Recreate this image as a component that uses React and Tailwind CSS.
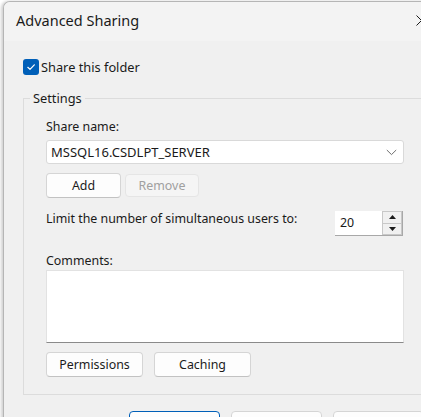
import React from "react";

const font = { fontFamily: '"Noto Sans", "Segoe UI", sans-serif' };

function Btn({ children, disabled, className = "" }) {
  return (
    <div
      className={
        "flex items-center justify-center rounded-[4px] border text-[12.4px] leading-[16px] " +
        (disabled
          ? "border-[#e5e5e5] bg-[#f5f5f5] text-[#a0a0a0] "
          : "border-[#d5d5d5] border-b-[#c2c2c2] bg-[#fdfdfd] text-[#1b1b1b] ") +
        className
      }
    >
      {children}
    </div>
  );
}

export default function App() {
  return (
    <div className="w-[421px] h-[417px] overflow-hidden bg-white" style={font}>
      <div className="ml-[3px] mt-[1px] w-[441px] h-[440px] rounded-tl-[7px] border-l border-t border-[#b5b5b5] bg-[#f0f0f0] overflow-hidden shadow-[-2px_0_3px_rgba(0,0,0,0.18)]">
        {/* Title bar */}
        <div className="flex h-[39px] items-center bg-[#f3f3f3] pb-[3px]">
          <div className="pl-[12px] text-[14.5px] leading-[20px] text-[#1a1a1a]">Advanced Sharing</div>
          <div className="ml-auto flex h-full w-[46px] items-center justify-center">
            <svg width="11" height="11" viewBox="0 0 11 11">
              <path d="M0.5 0.5 L10.5 10.5 M10.5 0.5 L0.5 10.5" stroke="#1a1a1a" strokeWidth="1" fill="none" />
            </svg>
          </div>
        </div>

        {/* Body */}
        <div className="pl-[19px] pr-[17px] pt-[18px]">
          <div className="flex h-[16px] items-center">
            <div className="flex h-[16px] w-[16px] items-center justify-center rounded-[3px] bg-[#005fb8]">
              <svg width="12" height="12" viewBox="0 0 12 12">
                <path d="M2.8 6.3 L5 8.4 L9.3 3.8" stroke="#ffffff" strokeWidth="1.2" fill="none" strokeLinecap="round" strokeLinejoin="round" />
              </svg>
            </div>
            <span className="ml-[2px] text-[12.8px] leading-[16px] text-[#1a1a1a]">Share this folder</span>
          </div>

          <fieldset className="mt-[15px] border border-[#dcdcdc] pl-[22px] pr-[22px] pt-[13px] pb-[17px]">
            <legend className="ml-[-16px] px-[3px] text-[12.8px] leading-[16px] text-[#1a1a1a]">Settings</legend>

            <div className="text-[12.4px] leading-[16px] text-[#1a1a1a]">Share name:</div>
            <div className="mt-[5px] flex h-[24px] w-[358px] items-center justify-between rounded-[3px] border border-[#d9d9d9] bg-white pl-[4px] pr-[6px]">
              <span className="text-[13px] leading-[16px] text-[#1a1a1a]">MSSQL16.CSDLPT_SERVER</span>
              <svg width="11" height="7" viewBox="0 0 11 7">
                <path d="M0.8 1 L5.5 5.6 L10.2 1" stroke="#6e6e6e" strokeWidth="1" fill="none" />
              </svg>
            </div>

            <div className="mt-[9px] flex gap-[4px]">
              <Btn className="h-[25px] w-[75px]">Add</Btn>
              <Btn disabled className="mt-[1px] h-[23px] w-[74px]">Remove</Btn>
            </div>

            <div className="mt-[13px] flex w-[358px] items-start justify-between">
              <span className="text-[12.4px] leading-[16px] text-[#1a1a1a]">Limit the number of simultaneous users to:</span>
              <div className="mr-[1px] flex h-[25px] border-b border-r border-[#a8a8a8]">
                <div className="flex w-[47px] items-center bg-white pl-[5px] text-[12.4px] leading-[16px] text-[#1a1a1a]">20</div>
                <div className="flex w-[20px] flex-col border-l border-[#c8c8c8] bg-[#f0f0f0]">
                  <div className="flex flex-1 items-center justify-center border border-[#c8c8c8] border-l-0">
                    <svg width="7" height="4" viewBox="0 0 7 4"><path d="M0 4 L3.5 0 L7 4 Z" fill="#1a1a1a" /></svg>
                  </div>
                  <div className="flex flex-1 items-center justify-center border border-t-0 border-l-0 border-[#c8c8c8]">
                    <svg width="7" height="4" viewBox="0 0 7 4"><path d="M0 0 L3.5 4 L7 0 Z" fill="#1a1a1a" /></svg>
                  </div>
                </div>
              </div>
            </div>

            <div className="mt-[17px] text-[12.4px] leading-[16px] text-[#1a1a1a]">Comments:</div>
            <div className="mt-[1px] h-[73px] w-[358px] border border-[#e2e2e2] border-b-[#8a8a8a] bg-white" />

            <div className="mt-[9px] flex gap-[11px]">
              <Btn className="h-[25px] w-[97px]">Permissions</Btn>
              <Btn className="h-[25px] w-[97px]">Caching</Btn>
            </div>
          </fieldset>

          <div className="mt-[16px] flex justify-end gap-[11px] pr-[3px]">
            <div className="h-[25px] w-[91px] rounded-[4px] border border-[#005fb8] bg-[#fdfdfd]" />
            <div className="h-[25px] w-[91px] rounded-[4px] border border-[#d5d5d5] bg-[#fdfdfd]" />
            <div className="h-[25px] w-[91px] rounded-[4px] border border-[#d5d5d5] bg-[#fdfdfd]" />
          </div>
        </div>
      </div>
    </div>
  );
}
